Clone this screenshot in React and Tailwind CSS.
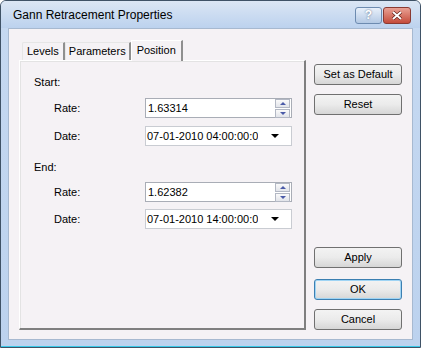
import React from "react";

function Btn({ children, primary, className = "" }) {
  return (
    <button
      className={
        "w-[88px] h-[21px] rounded-[3px] border text-[11px] text-black bg-gradient-to-b from-[#f3f3f3] via-[#ebebeb] to-[#d6d6d6] " +
        (primary ? "border-[#3c7fb1] shadow-[inset_0_0_0_1px_#9fd4f4] " : "border-[#707070] ") +
        className
      }
    >
      {children}
    </button>
  );
}

function Spin() {
  return (
    <div className="flex flex-col gap-[1px] pr-[1px]">
      <div className="w-[15px] h-[9px] border border-[#b3b8c4] bg-gradient-to-b from-[#fafafa] to-[#e2e4ea] flex items-center justify-center">
        <div className="w-0 h-0 border-l-[3px] border-r-[3px] border-b-[3px] border-l-transparent border-r-transparent border-b-[#4b5ba8]" />
      </div>
      <div className="w-[15px] h-[9px] border border-[#b3b8c4] bg-gradient-to-b from-[#fafafa] to-[#e2e4ea] flex items-center justify-center">
        <div className="w-0 h-0 border-l-[3px] border-r-[3px] border-t-[3px] border-l-transparent border-r-transparent border-t-[#4b5ba8]" />
      </div>
    </div>
  );
}

function RateField({ value }) {
  return (
    <div className="w-[147px] h-[20px] border border-[#a9adb6] bg-white flex items-center justify-between">
      <span className="pl-[2px]">{value}</span>
      <Spin />
    </div>
  );
}

function DateField({ value }) {
  return (
    <div className="w-[147px] h-[20px] border border-[#c9ccd2] bg-white flex items-center">
      <span className="w-[112px] overflow-hidden whitespace-nowrap pl-[1px]">{value}</span>
      <div className="flex-1 flex justify-center">
        <div className="w-0 h-0 border-l-[4px] border-r-[4px] border-t-[4px] border-l-transparent border-r-transparent border-t-black" />
      </div>
    </div>
  );
}

function Row({ label, children, className = "" }) {
  return (
    <div className={"flex items-center " + className}>
      <span className="w-[125px] pl-[34px]">{label}</span>
      {children}
    </div>
  );
}

export default function App() {
  return (
    <div
      className="w-[421px] h-[348px] border border-[#3f5266] rounded-t-[6px] bg-gradient-to-b from-[#c6d9f1] to-[#bcd2ee] flex flex-col text-[11px] leading-[13px] text-black overflow-hidden"
      style={{ fontFamily: "'Liberation Sans', Arial, sans-serif" }}
    >
      <div className="h-[27px] flex items-center justify-between pl-[12px] pr-[9px] bg-gradient-to-b from-[#dbe6f4] to-[#bcd2ee]">
        <span className="text-[12px] text-black pt-[1px]">Gann Retracement Properties</span>
        <div className="flex gap-[1px] pt-[2px]">
          <div className="w-[27px] h-[17px] rounded-[3px] border border-[#6d8bb0] bg-gradient-to-b from-[#e8f0fa] to-[#b4c9e4] flex items-center justify-center text-[12px] font-bold text-white [text-shadow:0_0_2px_#4d6380]">
            ?
          </div>
          <div className="w-[28px] h-[17px] rounded-[3px] border border-[#8a3a32] bg-gradient-to-b from-[#e8a094] to-[#c44a3a] flex items-center justify-center">
            <svg width="12" height="9" viewBox="0 0 12 9">
              <path d="M2 1 L10 8 M10 1 L2 8" stroke="#5a1a12" strokeWidth="3.2" />
              <path d="M2 1 L10 8 M10 1 L2 8" stroke="white" strokeWidth="2" />
            </svg>
          </div>
        </div>
      </div>
      <div className="mx-[7px] h-[312px] bg-[#f5f2f5] border border-[#a7b9d0] flex">
        <div className="pl-[10px] pt-[11px] flex flex-col">
          <div className="flex items-end h-[20px] pl-[3px] relative z-10">
            <div className="h-[18px] px-[4px] flex items-center border-t border-l border-[#e6e6e6] border-r-2 border-r-[#8f8f8f] rounded-tl-[2px]">Levels</div>
            <div className="h-[18px] px-[3px] flex items-center border-t border-l border-[#e6e6e6] border-r-2 border-r-[#8f8f8f]">Parameters</div>
            <div className="h-[21px] -mb-[1px] px-[5px] pb-[2px] flex items-center bg-[#f5f2f5] border-t border-l border-white border-r-2 border-r-[#8f8f8f]">Position</div>
          </div>
          <div className="w-[287px] h-[270px] border-t border-l border-white border-r-2 border-b-2 border-r-[#7f7f7f] border-b-[#7f7f7f] shadow-[inset_1px_1px_0_#e3e3e3]">
            <div className="pl-[14px] pt-[15px]">Start:</div>
            <Row label="Rate:" className="mt-[9px]">
              <RateField value="1.63314" />
            </Row>
            <Row label="Date:" className="mt-[8px]">
              <DateField value="07-01-2010 04:00:00:00" />
            </Row>
            <div className="pl-[14px] pt-[15px]">End:</div>
            <Row label="Rate:" className="mt-[8px]">
              <RateField value="1.62382" />
            </Row>
            <Row label="Date:" className="mt-[7px]">
              <DateField value="07-01-2010 14:00:00:00" />
            </Row>
          </div>
        </div>
        <div className="ml-[8px] pt-[35px] flex flex-col">
          <Btn>Set as Default</Btn>
          <Btn className="mt-[9px]">Reset</Btn>
          <Btn className="mt-[132px]">Apply</Btn>
          <Btn primary className="mt-[11px]">OK</Btn>
          <Btn className="mt-[9px]">Cancel</Btn>
        </div>
      </div>
      <div className="flex-1 border-b border-[#38c8e8]" />
    </div>
  );
}
